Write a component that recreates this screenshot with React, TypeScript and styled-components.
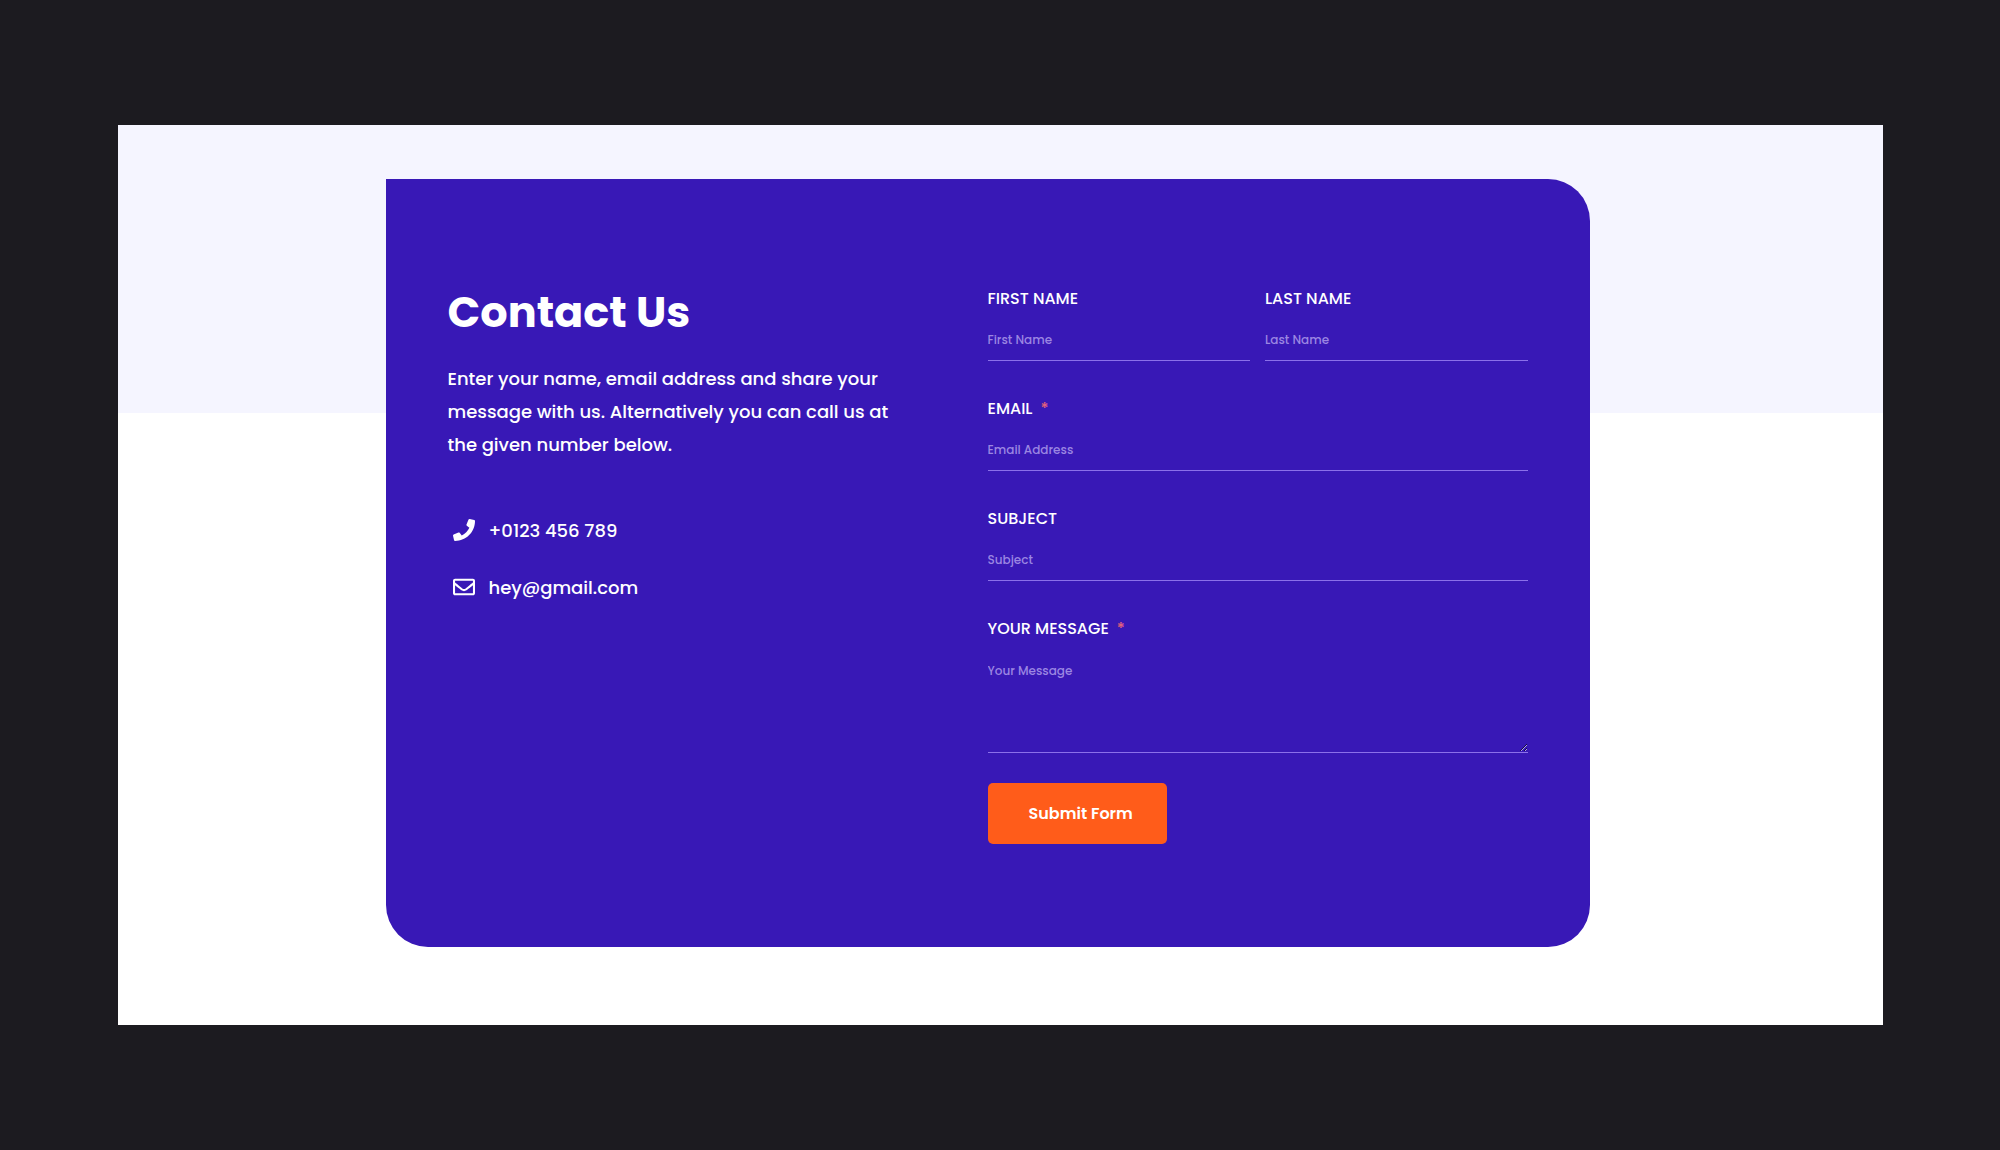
import React from "react";
import styled, { createGlobalStyle } from "styled-components";
import { FaPhone, FaRegEnvelope } from "react-icons/fa";

const GlobalStyle = createGlobalStyle`
  *, *::before, *::after { box-sizing: border-box; }
  body { margin: 0; background: #1c1b20; }
  body, input, textarea, button { font-family: Poppins, Inter, sans-serif; }
`;

const Page = styled.div`
  min-height: 100vh;
  padding: 125px 117px 125px 118px;
  background: #1c1b20;
`;

const Section = styled.main`
  padding: 54px 26px 78px 0;
  background: linear-gradient(#f5f5ff 32%, #ffffff 32%);
`;

const Card = styled.section`
  display: grid;
  grid-template-columns: 1fr 1fr;
  max-width: 1204px;
  margin: 0 auto;
  padding: 107px 62px 103px;
  border-radius: 0 42px 42px 42px;
  background: #3818b6;
  color: #ffffff;
`;

const Intro = styled.div`
  padding-right: 80px;
`;

const Title = styled.h1`
  margin: 0;
  font-size: 43px;
  line-height: 52px;
  font-weight: 700;
`;

const Lead = styled.p`
  margin: 24px 0 58px;
  font-size: 18px;
  line-height: 33px;
  font-weight: 500;
`;

const ContactList = styled.ul`
  display: grid;
  gap: 33px;
  margin: 0;
  padding: 0 0 0 5px;
  list-style: none;
`;

const ContactLink = styled.a`
  display: flex;
  align-items: center;
  gap: 14px;
  font-size: 18px;
  line-height: 24px;
  font-weight: 500;
  color: inherit;
  text-decoration: none;

  svg {
    margin-bottom: 2px;
  }
`;

const Form = styled.form`
  display: grid;
  gap: 35px;
`;

const NameRow = styled.div`
  display: grid;
  grid-template-columns: 1fr 1fr;
  gap: 15px;
`;

const Field = styled.div`
  display: flex;
  flex-direction: column;
  gap: 8px;
`;

const Label = styled.label`
  font-size: 16px;
  line-height: 26px;
  font-weight: 500;
  text-transform: uppercase;
`;

const Required = styled.span`
  margin-left: 8px;
  color: #e0607c;
`;

const Input = styled.input`
  width: 100%;
  height: 41px;
  padding: 0;
  border: 0;
  border-bottom: 1px solid #8b70ea;
  border-radius: 0;
  outline: 0;
  background: transparent;
  color: #ffffff;
  font-size: 12px;
  line-height: 20px;
  font-weight: 500;

  &::placeholder {
    color: #9b86e2;
    opacity: 1;
  }
`;

const TextArea = styled(Input).attrs({ as: "textarea" })`
  display: block;
  height: 103px;
  padding: 11px 0;
  resize: vertical;
`;

const Actions = styled.div`
  margin-top: -5px;
`;

const Submit = styled.button`
  height: 61px;
  padding: 0 34px 0 41px;
  border: 0;
  border-radius: 5px;
  background: #ff5c1a;
  color: #ffffff;
  font-size: 16px;
  line-height: 24px;
  font-weight: 600;
  cursor: pointer;
`;

type TextFieldProps = {
  id: string;
  label: string;
  placeholder: string;
  type?: string;
  required?: boolean;
  multiline?: boolean;
};

function TextField({ id, label, placeholder, type = "text", required, multiline }: TextFieldProps) {
  return (
    <Field>
      <Label htmlFor={id}>
        {label}
        {required && <Required>*</Required>}
      </Label>
      {multiline ? (
        <TextArea id={id} name={id} placeholder={placeholder} required={required} />
      ) : (
        <Input id={id} name={id} type={type} placeholder={placeholder} required={required} />
      )}
    </Field>
  );
}

export default function App() {
  return (
    <Page>
      <GlobalStyle />
      <Section>
        <Card>
          <Intro>
            <Title>Contact Us</Title>
            <Lead>
              Enter your name, email address and share your message with us. Alternatively you can
              call us at the given number below.
            </Lead>
            <ContactList>
              <li>
                <ContactLink href="tel:+0123456789">
                  <FaPhone size={22} aria-hidden />
                  +0123 456 789
                </ContactLink>
              </li>
              <li>
                <ContactLink href="mailto:hey@gmail.com">
                  <FaRegEnvelope size={22} aria-hidden />
                  hey@gmail.com
                </ContactLink>
              </li>
            </ContactList>
          </Intro>
          <Form onSubmit={(event) => event.preventDefault()}>
            <NameRow>
              <TextField id="first-name" label="First Name" placeholder="First Name" />
              <TextField id="last-name" label="Last Name" placeholder="Last Name" />
            </NameRow>
            <TextField id="email" label="Email" placeholder="Email Address" type="email" required />
            <TextField id="subject" label="Subject" placeholder="Subject" />
            <TextField id="message" label="Your Message" placeholder="Your Message" required multiline />
            <Actions>
              <Submit type="submit">Submit Form</Submit>
            </Actions>
          </Form>
        </Card>
      </Section>
    </Page>
  );
}
